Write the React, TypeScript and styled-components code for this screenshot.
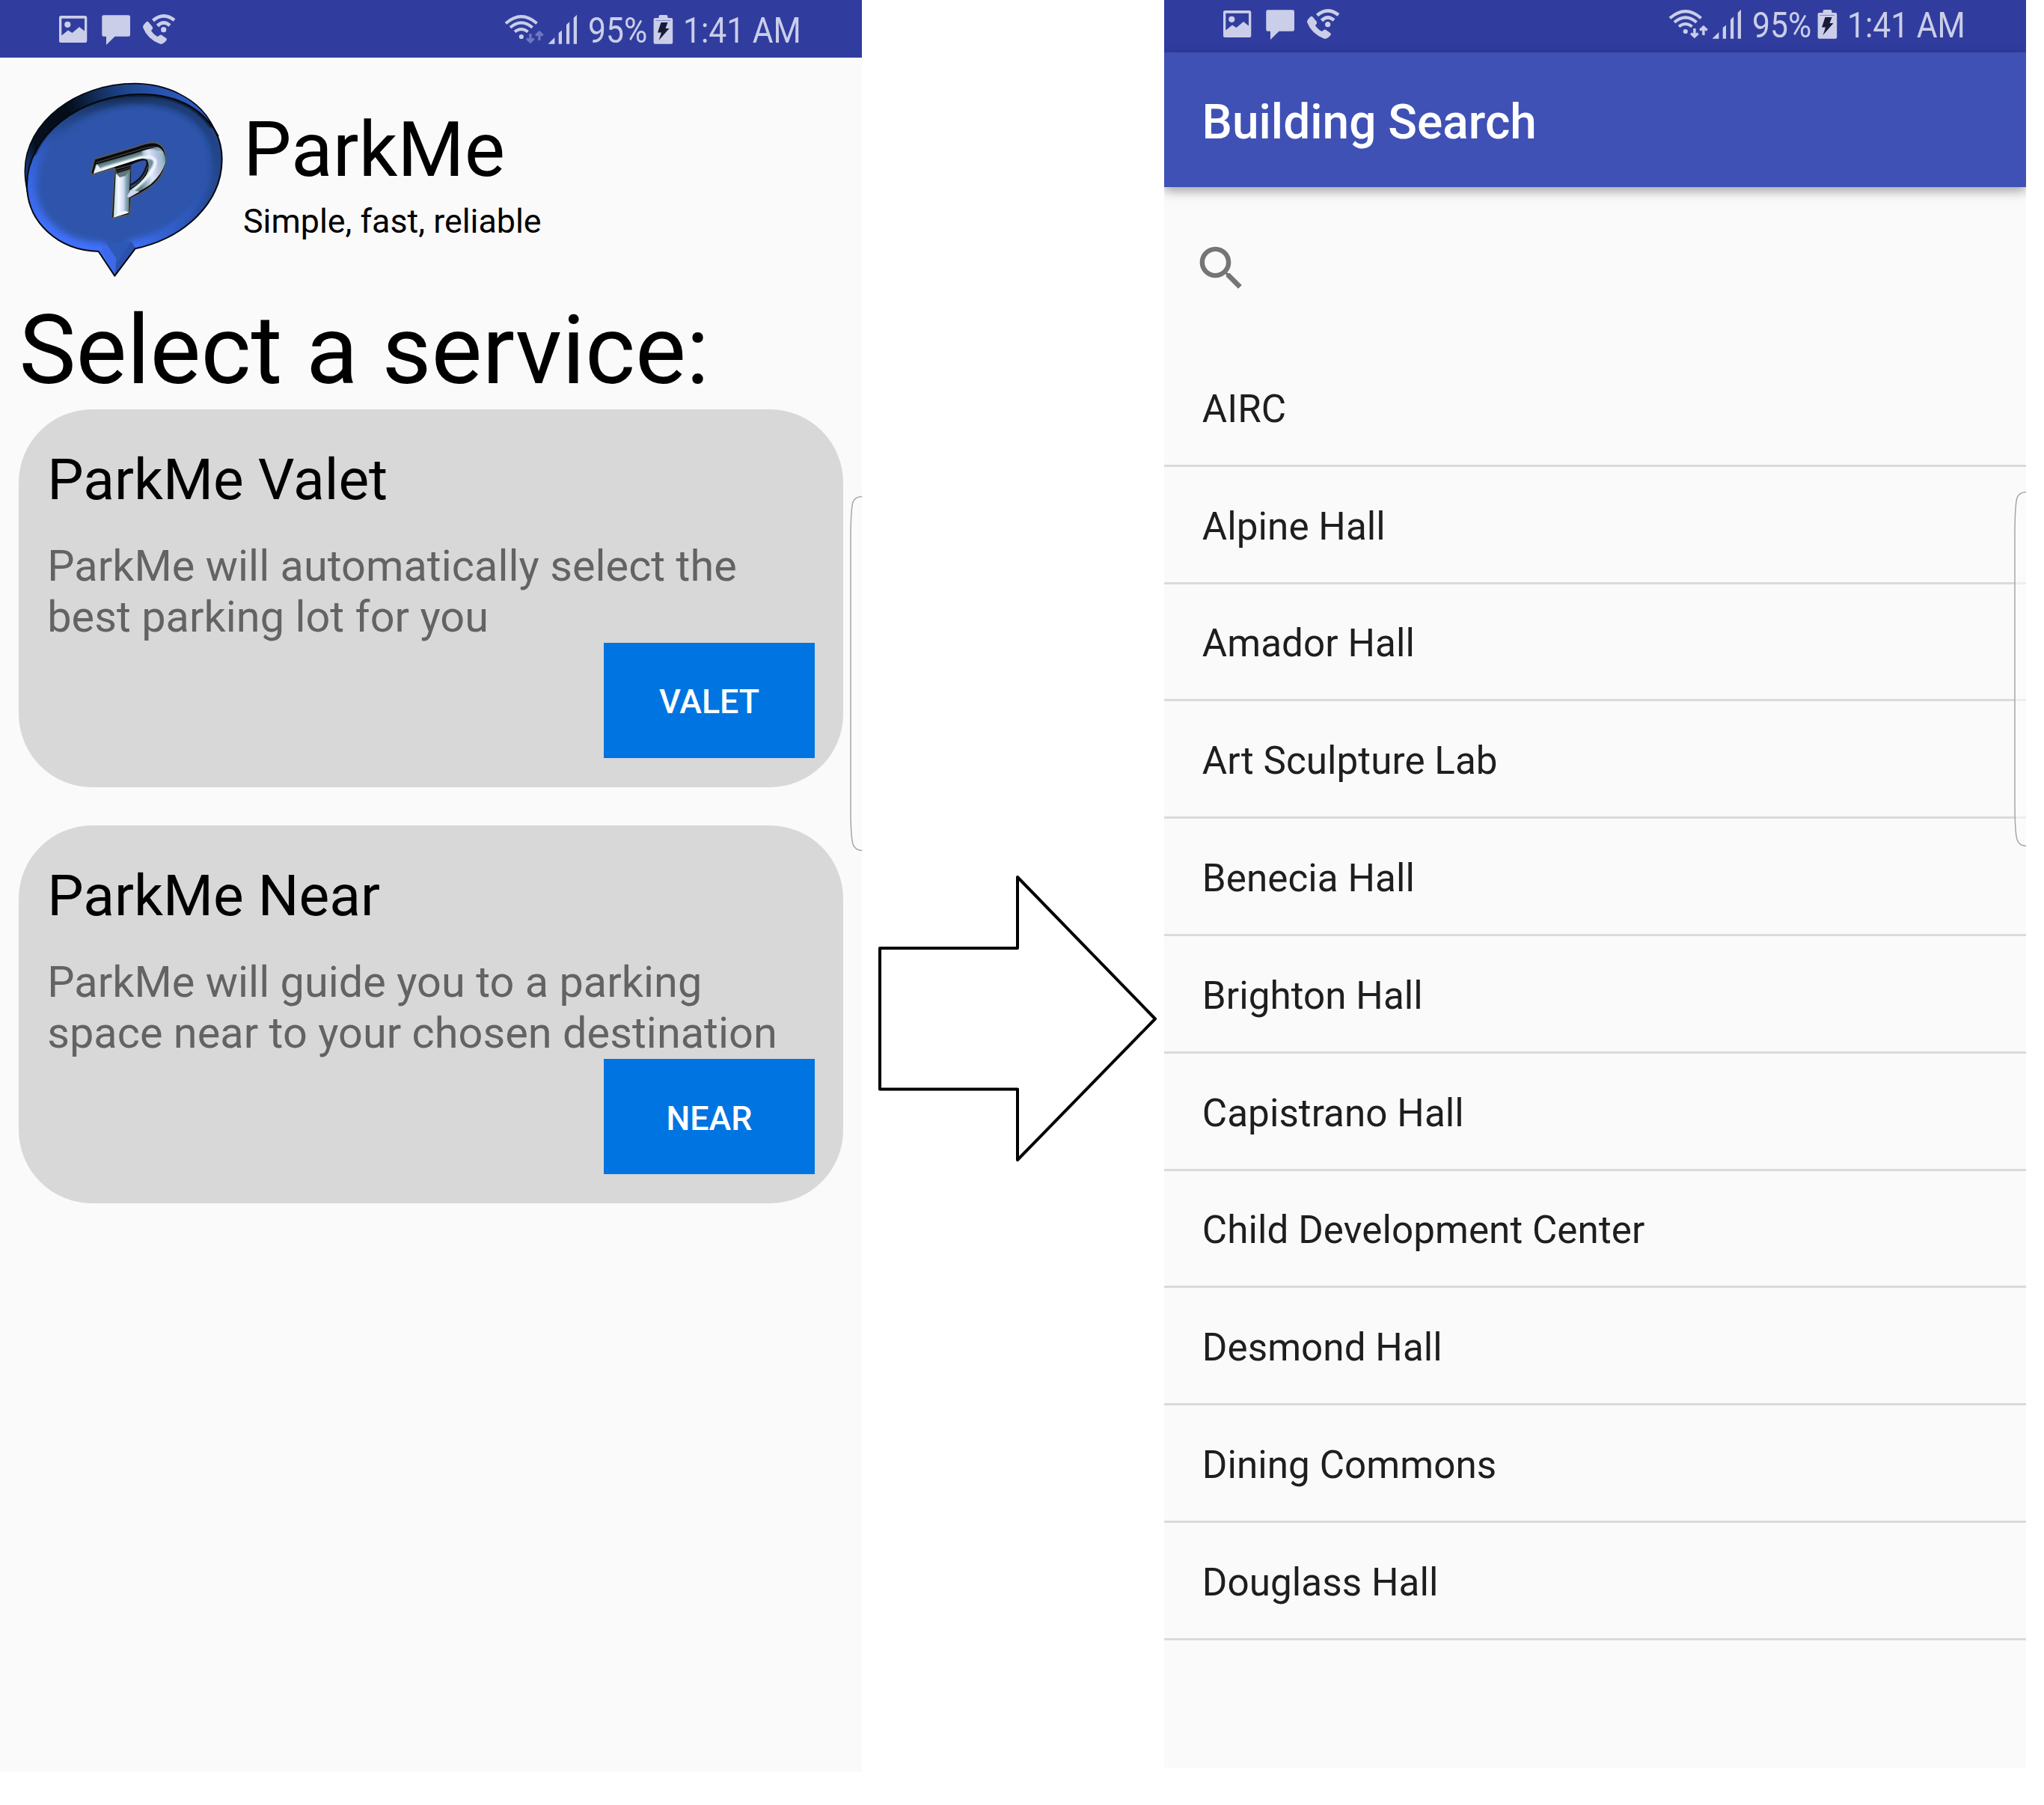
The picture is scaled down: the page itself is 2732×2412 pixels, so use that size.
import React from "react";
import styled, { createGlobalStyle } from "styled-components";

const GlobalStyle = createGlobalStyle`
  * { box-sizing: border-box; }
  html, body { margin: 0; background: #fff; }
  body { font-family: Roboto, "Liberation Sans", sans-serif; color: #000; }
  h1, h2, h3, p, ul { margin: 0; padding: 0; font-weight: 400; }
  svg { display: block; flex: none; }
`;

const Page = styled.main`
  display: grid;
  grid-template-columns: 1152px 404px 1152px;
  align-items: start;
  width: 2732px;
  height: 2412px;
  overflow: hidden;
`;

const Phone = styled.section<{ $height: number }>`
  position: relative;
  height: ${(p) => p.$height}px;
  background: #fafafa;
  overflow: hidden;
`;

const StatusBar = styled.header<{ $height: number }>`
  display: flex;
  justify-content: space-between;
  align-items: flex-end;
  height: ${(p) => p.$height}px;
  padding: 0 80px 0 77px;
  background: #303d9f;
  color: #cbcee8;
`;

const StatusInfo = styled.div`
  display: flex;
  height: 77px;
  font-size: 49px;
  line-height: 82px;
  white-space: nowrap;
`;

const StatusText = styled.span<{ $width: number }>`
  width: ${(p) => p.$width}px;
  transform: scaleX(0.87);
  transform-origin: 0 50%;
`;

const Brand = styled.div`
  display: flex;
  gap: 15px;
  height: 323px;
  padding: 23px 0 0 20px;
`;

const BrandText = styled.div`
  display: flex;
  flex-direction: column;
  gap: 10px;
  padding-top: 40px;
`;

const BrandName = styled.h1`
  font-size: 102.4px;
  line-height: 120px;
`;

const Tagline = styled.p`
  font-size: 44.8px;
  line-height: 52px;
`;

const Heading = styled.h2`
  height: 147px;
  padding-left: 25.6px;
  font-size: 128px;
  line-height: 136px;
`;

const Services = styled.div`
  display: flex;
  flex-direction: column;
  gap: 51.2px;
  padding: 0 24.8px;
`;

const Card = styled.article`
  display: flex;
  flex-direction: column;
  height: 505px;
  padding: 49px 38.4px 39.4px;
  border-radius: 98px;
  background: #d8d8d8;
`;

const CardTitle = styled.h3`
  font-size: 76.8px;
  line-height: 90px;
`;

const CardText = styled.p`
  margin-top: 36.5px;
  font-size: 57.6px;
  line-height: 68px;
  letter-spacing: 0.05px;
  color: #636363;
  white-space: pre;
`;

const CardButton = styled.button`
  flex: none;
  align-self: flex-end;
  width: 281.6px;
  height: 153.6px;
  margin-top: auto;
  padding: 4px 0 0;
  border: 0;
  background: #0074e1;
  color: #fff;
  font: 500 44.8px Roboto, sans-serif;
`;

const ArrowCell = styled.div`
  padding: 1160px 0 0 14px;
`;

const Toolbar = styled.div`
  display: flex;
  align-items: center;
  height: 180px;
  padding: 7px 50.5px 0;
  background: #3f51b5;
  box-shadow: 0 5px 14px rgba(0, 0, 0, 0.36);
  color: #fff;
`;

const ToolbarTitle = styled.h1`
  && {
    font-size: 64px;
    font-weight: 500;
  }
`;

const SearchRow = styled.div`
  height: 217px;
  padding: 69.5px 0 0 38px;
`;

const List = styled.ul`
  list-style: none;
`;

const Row = styled.li`
  display: flex;
  align-items: center;
  height: 156.8px;
  padding: 5px 50.8px 0;
  border-bottom: 3px solid #dadada;
  font-size: 51.2px;
  letter-spacing: 0.06px;
  color: #1e1e1e;
`;

const HandleSvg = styled.svg<{ $top: number }>`
  position: absolute;
  right: 0;
  top: ${(p) => p.$top}px;
`;

const NotificationIcons = () => (
  <svg width="162" height="77" viewBox="0 0 162 77" fill="#cbcee8">
    <path
      fillRule="evenodd"
      d="M4.500 21H37Q39.300 21 39.300 23.500V54.500Q39.300 57 37 57H4.500Q2 57 2 54.500V23.500Q2 21 4.500 21ZM5.300 24.700V47.500L14 40.500L19.500 44L29 36L36 41.500V24.700Z"
    />
    <circle cx="13.300" cy="32.800" r="4.100" />
    <path d="M61.500 20.300H94.700Q97 20.300 97 22.500V46.500Q97 48.800 94.700 48.800H76.500L65 60V48.800H61.500Q59.300 48.800 59.300 46.500V22.500Q59.300 20.300 61.500 20.300Z" />
    <path d="M119 29Q113.200 34 114.200 37Q120 52 136.500 58.600Q140 60 145 54.500Q146.800 52.500 145 51L138.500 46.500Q136.500 46 134 49Q128 46 125 41L127 38.500Q127.500 37 126.500 35.500L121.500 29.500Q120 28.300 119 29Z" />
    <g fill="none" stroke="#cbcee8" strokeWidth="4.600">
      <path d="M127.500 27.500Q141.500 15.500 156 27" />
      <path d="M133.500 34.500Q141.500 26.500 150 34" />
    </g>
    <circle cx="141.700" cy="39.700" r="3.600" />
  </svg>
);

const SignalIcons = ({ active }: { active: boolean }) => (
  <svg width="113" height="77" viewBox="0 0 113 77" fill="#cbcee8">
    <g fill="none" stroke="#cbcee8" strokeWidth="4">
      <path d="M3 31.200Q23.800 13 44.600 31.200" />
      <path d="M9 36.800Q23.800 24 38.600 36.800" />
      <path d="M15 42.500Q23.800 35.500 32.600 42.500" />
    </g>
    <circle cx="23.800" cy="49" r="3.100" />
    <path
      fill="none"
      stroke={active ? "#cbcee8" : "#6f78bf"}
      strokeWidth="3.400"
      d="M35.900 45V56M31.200 51.500L35.900 56L40.600 51.500M47.900 54V43.500M43.200 47.500L47.900 43L52.600 47.500"
    />
    <path d="M59.500 58.700L68.400 50V58.700ZM73.700 44L78 40.500V58.700H73.700ZM84 33L88.200 29.300V58.700H84ZM93.700 24L98 19.800V58.700H93.700Z" />
  </svg>
);

const Battery = () => (
  <svg width="41" height="77" viewBox="0 0 41 77">
    <path
      fill="#cbcee8"
      d="M8.500 24V22Q8.500 20 10.500 20H18.500Q20.500 20 20.500 22V24H25.200Q27.200 24 27.200 26V56.700Q27.200 58.700 25.200 58.700H3.600Q1.600 58.700 1.600 56.700V26Q1.600 24 3.600 24Z"
    />
    <path fill="#7f88c6" d="M4.500 27H24V28H4.500Z" />
    <path fill="#181b38" d="M11.500 30H20.500L17.500 38H22.500L8.500 54L12 43.500H7Z" />
  </svg>
);

const Status = ({ height, active }: { height: number; active: boolean }) => (
  <StatusBar $height={height}>
    <NotificationIcons />
    <StatusInfo>
      <SignalIcons active={active} />
      <StatusText $width={86}>95%</StatusText>
      <Battery />
      <StatusText $width={159}>1:41 AM</StatusText>
    </StatusInfo>
  </StatusBar>
);

const FACE =
  "M482 697C690 652 830 505 830 338C830 185 695 78 505 78C262 78 48 245 48 440C48 590 172 704 335 708L400 806Z";
const HOOK =
  "M323 360L480 315Q545 292 575 290Q604 302 602 352Q590 400 545 438Q500 470 449 487L462 462Q505 435 527 402Q545 370 530 340Q515 332 490 340L315 396Z";
const STEM = "M405 377L464 364L459 462L457 553L395 572Z";

const Logo = () => (
  <svg width="290" height="280" viewBox="0 0 870 840">
    <defs>
      <linearGradient id="rim" gradientUnits="userSpaceOnUse" x1="40" y1="400" x2="790" y2="190">
        <stop offset="0" stopColor="#1c408a" />
        <stop offset="0.090" stopColor="#061020" />
        <stop offset="0.300" stopColor="#040c18" />
        <stop offset="0.480" stopColor="#14305f" />
        <stop offset="0.620" stopColor="#1f468c" />
        <stop offset="0.800" stopColor="#2854b0" />
        <stop offset="1" stopColor="#2d5ccc" />
      </linearGradient>
      <linearGradient id="bevel" gradientUnits="userSpaceOnUse" x1="420" y1="80" x2="260" y2="700">
        <stop offset="0" stopColor="#132d56" />
        <stop offset="0.150" stopColor="#1c3c72" />
        <stop offset="0.380" stopColor="#2c53aa" />
        <stop offset="0.600" stopColor="#3664e0" />
        <stop offset="1" stopColor="#4272ff" />
      </linearGradient>
      <linearGradient id="rightShade" gradientUnits="userSpaceOnUse" x1="480" y1="0" x2="840" y2="0">
        <stop offset="0" stopColor="#264c98" stopOpacity="0" />
        <stop offset="1" stopColor="#22458a" />
      </linearGradient>
      <linearGradient id="hook" gradientUnits="userSpaceOnUse" x1="440" y1="322" x2="452" y2="362">
        <stop offset="0" stopColor="#465e60" />
        <stop offset="0.450" stopColor="#7c9a9d" />
        <stop offset="0.700" stopColor="#eef8ff" />
        <stop offset="1" stopColor="#a9c4da" />
      </linearGradient>
      <linearGradient id="curve" gradientUnits="userSpaceOnUse" x1="490" y1="370" x2="605" y2="350">
        <stop offset="0" stopColor="#5e7f84" />
        <stop offset="0.450" stopColor="#dfe9ff" />
        <stop offset="0.700" stopColor="#bcc4e4" />
        <stop offset="1" stopColor="#86b3c0" />
      </linearGradient>
      <linearGradient id="stem" gradientUnits="userSpaceOnUse" x1="398" y1="0" x2="466" y2="0">
        <stop offset="0" stopColor="#b5d8e4" />
        <stop offset="0.250" stopColor="#f8fcff" />
        <stop offset="0.550" stopColor="#cfd8f6" />
        <stop offset="0.680" stopColor="#8fb0be" />
        <stop offset="1" stopColor="#4a6468" />
      </linearGradient>
      <filter id="soft" filterUnits="userSpaceOnUse" x="0" y="0" width="870" height="840">
        <feGaussianBlur stdDeviation="13" />
      </filter>
      <filter id="fine" filterUnits="userSpaceOnUse" x="0" y="0" width="870" height="840">
        <feGaussianBlur stdDeviation="3" />
      </filter>
      <clipPath id="faceClip">
        <path d={FACE} />
      </clipPath>
      <clipPath id="hookClip">
        <path d={HOOK} />
      </clipPath>
    </defs>
    <path
      d="M52 480C43 440 40 415 40 385C40 190 245 35 480 35C610 35 730 95 785 190L815 245L500 400Z"
      fill="url(#rim)"
      stroke="#05080f"
      strokeWidth="5"
    />
    <path d={FACE} fill="#2e55ab" />
    <g clipPath="url(#faceClip)">
      <path d={FACE} fill="none" stroke="url(#bevel)" strokeWidth="74" filter="url(#soft)" />
      <path
        d="M482 697C690 652 830 505 830 338C830 185 695 78 505 78"
        fill="none"
        stroke="url(#rightShade)"
        strokeWidth="64"
        filter="url(#soft)"
      />
      <path
        d="M75 320C140 170 300 78 505 78C640 78 740 135 790 210"
        fill="none"
        stroke="#081426"
        strokeWidth="14"
        filter="url(#fine)"
      />
      <path d="M345 706L365 676L408 730L402 800Z" fill="#3c69ea" />
      <path d="M365 676L466 668L484 696L402 800L406 735Z" fill="#2e58b6" />
      <path d="M466 670L484 697L404 800L406 760Z" fill="#2a52ac" />
    </g>
    <path d={FACE} fill="none" stroke="#05080f" strokeWidth="6" strokeLinejoin="round" />

    <path
      d="M319 338L480 290Q530 271 556 271Q604 276 605 335Q604 395 555 440Q515 473 465 494L460 560L393 575L388 570L400 374L310 400L305 392Z"
      fill="#0a0a0c"
      stroke="#57585c"
      strokeWidth="5"
      strokeLinejoin="round"
    />
    <path d="M466 360Q510 338 526 344Q532 385 505 418Q485 440 463 450Z" fill="#2e55ab" />
    <path d="M325 352L480 306Q540 284 575 290" fill="none" stroke="#5d5e62" strokeWidth="2.500" />
    <path d={HOOK} fill="url(#hook)" />
    <g clipPath="url(#hookClip)">
      <path d="M510 330Q552 330 545 365Q530 415 450 475" fill="none" stroke="#6f8e94" strokeWidth="20" filter="url(#fine)" />
      <path d="M510 315Q590 310 578 358Q560 410 450 488" fill="none" stroke="url(#curve)" strokeWidth="42" filter="url(#fine)" />
      <path d="M530 292Q608 280 600 350" fill="none" stroke="#7ba5ad" strokeWidth="12" filter="url(#fine)" />
      <path d="M350 378L500 334Q550 322 563 345Q565 390 470 465" fill="none" stroke="#f4faff" strokeWidth="11" filter="url(#fine)" />
    </g>
    <path d="M328 358L347 380L317 395Z" fill="#e6f2fb" />
    <path d="M462 442Q512 420 529 362" fill="none" stroke="#111317" strokeWidth="7" />
    <path d="M465 452Q515 430 534 365" fill="none" stroke="#5a6468" strokeWidth="3" />
    <path d={STEM} fill="url(#stem)" />
    <path d="M406 396L464 376L444 404L420 411Z" fill="#5d787c" />
    <path d="M397 571L418 550L445 546L457 553Z" fill="#f2f8ff" />
    <path d="M404 378L466 362L465 378L406 396Z" fill="#0b0b0e" stroke="#55565a" strokeWidth="3" />
    <path d="M405 388L464 371" stroke="#5d5e62" strokeWidth="2" />
    <path d="M464 462L449 487L458 492L500 468" fill="#cfd8f4" />
  </svg>
);

const EdgeHandle = ({ top }: { top: number }) => (
  <HandleSvg $top={top} width="17" height="476" viewBox="0 0 17 476">
    <path
      d="M18 1.500Q8 1.500 5 9Q2 20 2 60V416Q2 456 5 466Q8 474.500 18 474.500"
      fill="#fcfcfc"
      fillOpacity="0.600"
      stroke="#a6a6a6"
      strokeWidth="1.500"
    />
  </HandleSvg>
);

const services = [
  {
    title: "ParkMe Valet",
    text: "ParkMe will automatically select the\nbest parking lot for you",
    action: "VALET",
  },
  {
    title: "ParkMe Near",
    text: "ParkMe will guide you to a parking\nspace near to your chosen destination",
    action: "NEAR",
  },
];

const buildings = [
  "AIRC",
  "Alpine Hall",
  "Amador Hall",
  "Art Sculpture Lab",
  "Benecia Hall",
  "Brighton Hall",
  "Capistrano Hall",
  "Child Development Center",
  "Desmond Hall",
  "Dining Commons",
  "Douglass Hall",
];

export default function App() {
  return (
    <Page>
      <GlobalStyle />
      <Phone $height={2368}>
        <Status height={77} active={false} />
        <Brand>
          <Logo />
          <BrandText>
            <BrandName>ParkMe</BrandName>
            <Tagline>Simple, fast, reliable</Tagline>
          </BrandText>
        </Brand>
        <Heading>Select a service:</Heading>
        <Services>
          {services.map((s) => (
            <Card key={s.title}>
              <CardTitle>{s.title}</CardTitle>
              <CardText>{s.text}</CardText>
              <CardButton>{s.action}</CardButton>
            </Card>
          ))}
        </Services>
        <EdgeHandle top={662} />
      </Phone>
      <ArrowCell>
        <svg width="390" height="400" viewBox="0 0 390 400">
          <path
            d="M10 107H194V12L378 201.500L194 390V295.500H10Z"
            fill="#fff"
            stroke="#000"
            strokeWidth="4"
            strokeLinejoin="round"
          />
        </svg>
      </ArrowCell>
      <Phone $height={2362}>
        <Status height={70} active />
        <Toolbar>
          <ToolbarTitle>Building Search</ToolbarTitle>
        </Toolbar>
        <SearchRow>
          <svg width="77" height="77" viewBox="0 0 24 24" fill="#757575">
            <path d="M15.500 14h-.79l-.28-.27A6.471 6.471 0 0 0 16 9.500 6.500 6.500 0 1 0 9.500 16c1.610 0 3.090-.59 4.230-1.570l.27.28v.79l5 4.990L20.490 19l-4.990-5zm-6 0C7.010 14 5 11.990 5 9.500S7.010 5 9.500 5 14 7.010 14 9.500 11.990 14 9.500 14z" />
          </svg>
        </SearchRow>
        <List>
          {buildings.map((b) => (
            <Row key={b}>{b}</Row>
          ))}
        </List>
        <EdgeHandle top={656} />
      </Phone>
    </Page>
  );
}
